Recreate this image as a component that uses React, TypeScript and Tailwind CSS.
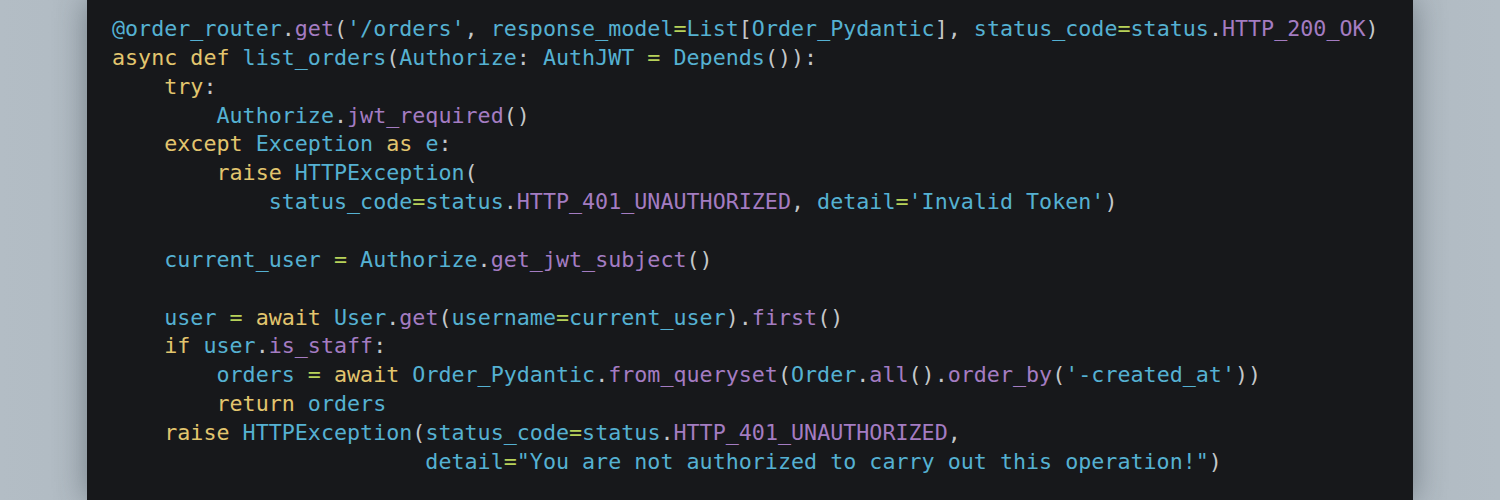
import * as React from 'react';

type Kind = 'c' | 'y' | 'p' | 'g' | 'w';
type Token = [Kind, string];

const colors: Record<Kind, string> = {
  c: 'text-[#55b1d2]',
  y: 'text-[#e2c56e]',
  p: 'text-[#a47cc2]',
  g: 'text-[#b7d25a]',
  w: 'text-[#c4c7c9]',
};

const lines: Token[][] = [
  [
    ['c', '@order_router'], ['w', '.'], ['p', 'get'], ['w', '('], ['c', "'/orders'"], ['w', ', '],
    ['c', 'response_model'], ['g', '='], ['c', 'List'], ['w', '['], ['c', 'Order_Pydantic'], ['w', '], '],
    ['c', 'status_code'], ['g', '='], ['c', 'status'], ['w', '.'], ['p', 'HTTP_200_OK'], ['w', ')'],
  ],
  [
    ['y', 'async def'], ['c', ' list_orders'], ['w', '('], ['c', 'Authorize'], ['w', ':'], ['c', ' AuthJWT '],
    ['g', '='], ['c', ' Depends'], ['w', '())'], ['w', ':'],
  ],
  [['y', '    try'], ['w', ':']],
  [['c', '        Authorize'], ['w', '.'], ['p', 'jwt_required'], ['w', '()']],
  [['y', '    except'], ['c', ' Exception '], ['y', 'as'], ['c', ' e'], ['w', ':']],
  [['y', '        raise'], ['c', ' HTTPException'], ['w', '(']],
  [
    ['c', '            status_code'], ['g', '='], ['c', 'status'], ['w', '.'], ['p', 'HTTP_401_UNAUTHORIZED'],
    ['w', ', '], ['c', 'detail'], ['g', '='], ['c', "'Invalid Token'"], ['w', ')'],
  ],
  [],
  [['c', '    current_user '], ['g', '='], ['c', ' Authorize'], ['w', '.'], ['p', 'get_jwt_subject'], ['w', '()']],
  [],
  [
    ['c', '    user '], ['g', '='], ['y', ' await'], ['c', ' User'], ['w', '.'], ['p', 'get'], ['w', '('],
    ['c', 'username'], ['g', '='], ['c', 'current_user'], ['w', ').'], ['p', 'first'], ['w', '()'],
  ],
  [['y', '    if'], ['c', ' user'], ['w', '.'], ['p', 'is_staff'], ['w', ':']],
  [
    ['c', '        orders '], ['g', '='], ['y', ' await'], ['c', ' Order_Pydantic'], ['w', '.'], ['p', 'from_queryset'],
    ['w', '('], ['c', 'Order'], ['w', '.'], ['p', 'all'], ['w', '().'], ['p', 'order_by'], ['w', '('],
    ['c', "'-created_at'"], ['w', '))'],
  ],
  [['y', '        return'], ['c', ' orders']],
  [
    ['y', '    raise'], ['c', ' HTTPException'], ['w', '('], ['c', 'status_code'], ['g', '='], ['c', 'status'],
    ['w', '.'], ['p', 'HTTP_401_UNAUTHORIZED'], ['w', ','],
  ],
  [
    ['c', '                        detail'], ['g', '='],
    ['c', '"You are not authorized to carry out this operation!"'], ['w', ')'],
  ],
];

const App: React.FC = () => {
  return (
    <div className="flex h-[500px] w-[1500px] justify-center overflow-hidden bg-gradient-to-r from-[#b3bdc5] via-[#a3adb5] to-[#b3bdc5]">
      <div className="h-full w-[1326px] bg-[#17181b] pl-[25px] pt-[15px] shadow-[0_0_30px_rgba(40,50,60,0.45)]">
        <pre className="font-['DejaVu_Sans_Mono',monospace] text-[21.7px] leading-[28.87px]">
          {lines.map((line, i) => (
            <div key={i} className="h-[28.87px] whitespace-pre">
              {line.map(([kind, text], j) => (
                <span key={j} className={colors[kind]}>
                  {text}
                </span>
              ))}
            </div>
          ))}
        </pre>
      </div>
    </div>
  );
};

export default App;
